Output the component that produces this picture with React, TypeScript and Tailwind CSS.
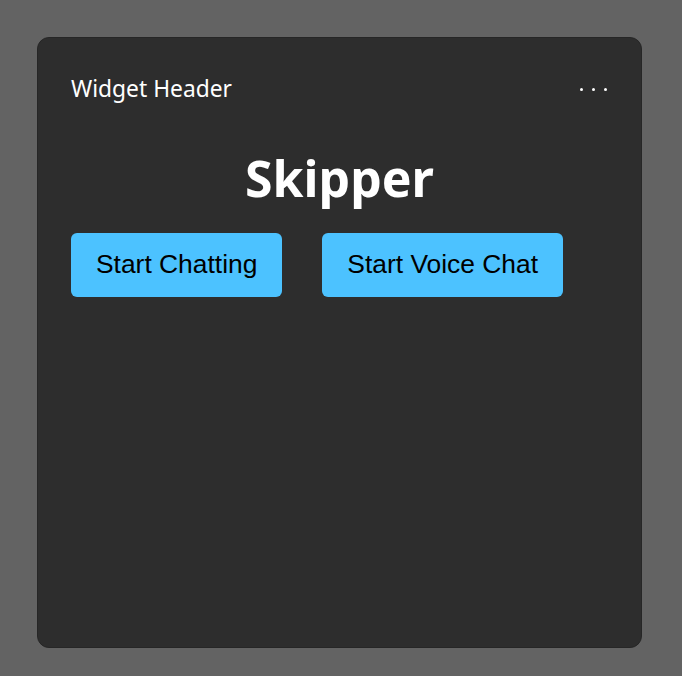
import React from "react";

export default function App() {
  return (
    <div className="min-h-[676px] w-full bg-[#636363] pt-[37px] pl-[37px]">
      <div
        className="flex h-[611px] w-[605px] flex-col rounded-[12px] border border-[#262626] bg-[#2d2d2d] px-[33px] pt-[36px]"
        style={{ fontFamily: '"Noto Sans", "Open Sans", sans-serif' }}
      >
        <div className="flex items-center justify-between">
          <div className="text-[22.8px] leading-[30px] text-white">Widget Header</div>
          <div className="mr-[1px] flex items-center gap-[9px] pt-[1px]">
            <span className="block h-[3px] w-[3px] rounded-full bg-white" />
            <span className="block h-[3px] w-[3px] rounded-full bg-white" />
            <span className="block h-[3px] w-[3px] rounded-full bg-white" />
          </div>
        </div>
        <h1 className="mt-[42px] text-center text-[50px] font-bold leading-[64px] text-white">
          Skipper
        </h1>
        <div
          className="mt-[23px] flex gap-[40px]"
          style={{ fontFamily: '"Liberation Sans", Arial, sans-serif' }}
        >
          <button className="h-[64px] rounded-[6px] bg-[#4cc2ff] px-[25px] text-[26.4px] text-black">
            Start Chatting
          </button>
          <button className="h-[64px] rounded-[6px] bg-[#4cc2ff] px-[25px] text-[26.4px] text-black">
            Start Voice Chat
          </button>
        </div>
      </div>
    </div>
  );
}
